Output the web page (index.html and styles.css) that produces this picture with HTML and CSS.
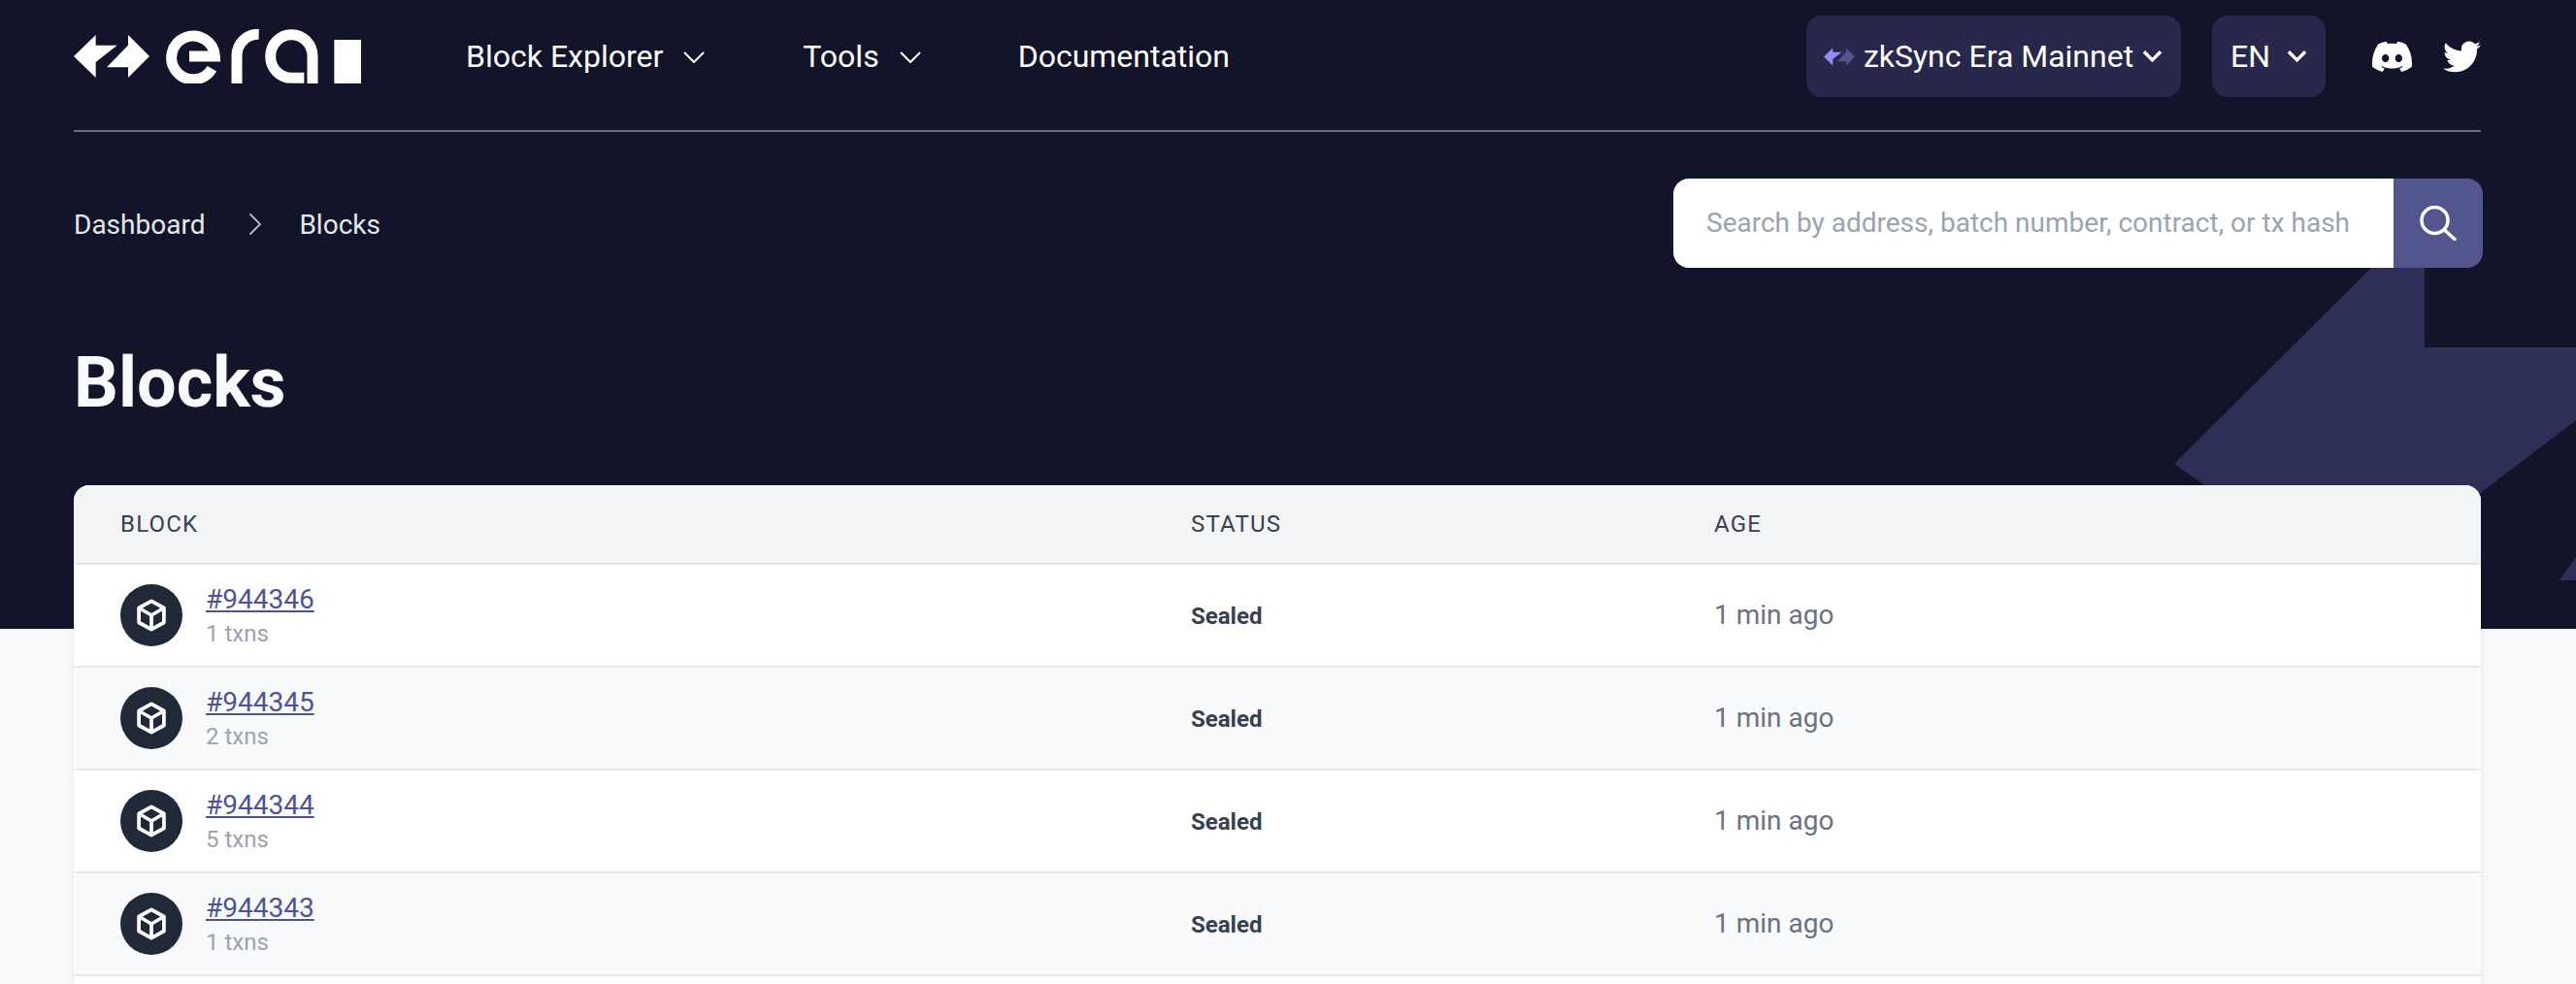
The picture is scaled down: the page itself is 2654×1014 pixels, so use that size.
FILE: index.html
```html
<!DOCTYPE html>
<html lang="en">
<head>
    <meta charset="UTF-8">
    <title>Blocks</title>
    <link rel="stylesheet" href="styles.css">
</head>
<body>

    <svg width="0" height="0" class="defs">
        <symbol id="cube" viewBox="0 0 24 24">
            <path d="M12 2.2 20.6 7v10L12 21.8 3.4 17V7z M3.4 7 12 12l8.600-5 M12 12v9.800" fill="none" stroke="#fff" stroke-width="2.500" stroke-linejoin="round"/>
        </symbol>
    </svg>

    <section class="hero">
        <svg class="hero-shape" viewBox="2200 260 454 388" width="454" height="388">
            <path d="M2443 276 2459 260H2498V358H2654V433L2540 520H2300L2240 478z" fill="#2e2f57"/>
            <path d="M2637 598 2654 574V598z" fill="#2e2f57"/>
        </svg>

        <header class="topbar">
            <a class="logo" href="#">
                <svg viewBox="78 90 888 168" width="296" height="56">
                    <path d="M78 174 146 108V140H212L146 192V240z" fill="#fff"/>
                    <path d="M312 174 246 108V140L180 208H246V240z" fill="#fff"/>
                    <g fill="none" stroke="#fff" stroke-width="33">
                        <path d="M435 174H514A67 67 0 1 0 505 212"/>
                        <path d="M582 258V172A66 66 0 0 1 650 106"/>
                        <path d="M816 258V174A65 67 0 1 0 752 241H790"/>
                    </g>
                    <rect x="883" y="123" width="83" height="135" fill="#fff"/>
                </svg>
            </a>
            <nav class="menu">
                <a href="#">Block Explorer
                    <svg class="chevron" viewBox="0 0 22 12" width="22" height="12"><path d="M1 1l10 10L21 1" fill="none" stroke="#fff" stroke-width="2"/></svg>
                </a>
                <a href="#">Tools
                    <svg class="chevron" viewBox="0 0 22 12" width="22" height="12"><path d="M1 1l10 10L21 1" fill="none" stroke="#fff" stroke-width="2"/></svg>
                </a>
                <a href="#">Documentation</a>
            </nav>
            <div class="topbar-right">
                <button class="pill pill-network">
                    <svg viewBox="78 108 234 132" width="32" height="19">
                        <path d="M78 174 146 108V140H212L146 192V240z" fill="#8e8ffb"/>
                        <path d="M312 174 246 108V140L180 208H246V240z" fill="#53558f"/>
                    </svg>
                    zkSync Era Mainnet
                    <svg viewBox="0 0 22 14" width="21" height="14"><path d="M2 2l9 9 9-9" fill="none" stroke="#fff" stroke-width="3.500"/></svg>
                </button>
                <button class="pill pill-lang">
                    EN
                    <svg viewBox="0 0 22 14" width="21" height="14"><path d="M2 2l9 9 9-9" fill="none" stroke="#fff" stroke-width="3.500"/></svg>
                </button>
                <a class="social" href="#">
                    <svg viewBox="0 0 16 16" width="41" height="41"><path fill="#fff" d="M13.545 2.907a13.227 13.227 0 0 0-3.257-1.011.05.05 0 0 0-.052.025c-.141.25-.297.577-.406.833a12.19 12.19 0 0 0-3.658 0 8.258 8.258 0 0 0-.412-.833.051.051 0 0 0-.052-.025c-1.125.194-2.22.534-3.257 1.011a.041.041 0 0 0-.021.018C.356 6.024-.213 9.047.066 12.032c.001.014.01.028.021.037a13.276 13.276 0 0 0 3.995 2.02.05.05 0 0 0 .056-.019c.308-.42.582-.863.818-1.329a.05.05 0 0 0-.01-.059.051.051 0 0 0-.018-.011 8.875 8.875 0 0 1-1.248-.595.05.05 0 0 1-.02-.066.051.051 0 0 1 .015-.019c.084-.063.168-.129.248-.195a.05.05 0 0 1 .051-.007c2.619 1.196 5.454 1.196 8.041 0a.052.052 0 0 1 .053.007c.08.066.164.132.248.195a.051.051 0 0 1-.004.085 8.254 8.254 0 0 1-1.249.594.05.05 0 0 0-.03.03.052.052 0 0 0 .003.041c.24.465.515.909.817 1.329a.05.05 0 0 0 .056.019 13.235 13.235 0 0 0 4.001-2.02.049.049 0 0 0 .021-.037c.334-3.451-.559-6.449-2.366-9.106a.034.034 0 0 0-.02-.019Zm-8.198 7.307c-.789 0-1.438-.724-1.438-1.612 0-.889.637-1.613 1.438-1.613.807 0 1.45.73 1.438 1.613 0 .888-.637 1.612-1.438 1.612Zm5.316 0c-.788 0-1.438-.724-1.438-1.612 0-.889.637-1.613 1.438-1.613.807 0 1.451.73 1.438 1.613 0 .888-.631 1.612-1.438 1.612Z"/></svg>
                </a>
                <a class="social" href="#">
                    <svg viewBox="0 0 24 24" width="39" height="39"><path fill="#fff" d="M23.953 4.57a10 10 0 01-2.825.775 4.958 4.958 0 002.163-2.723c-.951.555-2.005.959-3.127 1.184a4.92 4.92 0 00-8.384 4.482C7.69 8.095 4.067 6.13 1.64 3.162a4.822 4.822 0 00-.666 2.475c0 1.71.87 3.213 2.188 4.096a4.904 4.904 0 01-2.228-.616v.06a4.923 4.923 0 003.946 4.827 4.996 4.996 0 01-2.212.085 4.936 4.936 0 004.604 3.417 9.867 9.867 0 01-6.102 2.105c-.39 0-.779-.023-1.17-.067a13.995 13.995 0 007.557 2.209c9.053 0 13.998-7.496 13.998-13.985 0-.21 0-.42-.015-.63A9.935 9.935 0 0024 4.59z"/></svg>
                </a>
            </div>
        </header>

        <div class="toolbar">
            <div class="breadcrumb">
                <a href="#">Dashboard</a>
                <svg viewBox="0 0 14 24" width="14" height="24"><path d="M1.500 1.500 12 12 1.500 22.500" fill="none" stroke="#b9bbc6" stroke-width="1.800"/></svg>
                <span>Blocks</span>
            </div>
            <form class="search">
                <input type="text" placeholder="Search by address, batch number, contract, or tx hash">
                <button type="button">
                    <svg viewBox="0 0 38 36" width="38" height="36"><circle cx="15.500" cy="15" r="13.500" fill="none" stroke="#fff" stroke-width="3.500"/><path d="M25.500 25 36 34.500" stroke="#fff" stroke-width="3.500" stroke-linecap="round"/></svg>
                </button>
            </form>
        </div>

        <h1 class="title">Blocks</h1>
    </section>

    <main class="table-wrap">
        <table class="blocks">
            <thead>
                <tr>
                    <th class="col-block">Block</th>
                    <th class="col-status">Status</th>
                    <th>Age</th>
                </tr>
            </thead>
            <tbody>
                <tr>
                    <td>
                        <div class="block-cell">
                            <span class="block-icon"><svg width="36" height="36"><use href="#cube"/></svg></span>
                            <div><a href="#">#944346</a><small>1 txns</small></div>
                        </div>
                    </td>
                    <td class="status">Sealed</td>
                    <td class="age">1 min ago</td>
                </tr>
                <tr>
                    <td>
                        <div class="block-cell">
                            <span class="block-icon"><svg width="36" height="36"><use href="#cube"/></svg></span>
                            <div><a href="#">#944345</a><small>2 txns</small></div>
                        </div>
                    </td>
                    <td class="status">Sealed</td>
                    <td class="age">1 min ago</td>
                </tr>
                <tr>
                    <td>
                        <div class="block-cell">
                            <span class="block-icon"><svg width="36" height="36"><use href="#cube"/></svg></span>
                            <div><a href="#">#944344</a><small>5 txns</small></div>
                        </div>
                    </td>
                    <td class="status">Sealed</td>
                    <td class="age">1 min ago</td>
                </tr>
                <tr>
                    <td>
                        <div class="block-cell">
                            <span class="block-icon"><svg width="36" height="36"><use href="#cube"/></svg></span>
                            <div><a href="#">#944343</a><small>1 txns</small></div>
                        </div>
                    </td>
                    <td class="status">Sealed</td>
                    <td class="age">1 min ago</td>
                </tr>
                <tr class="row-tail">
                    <td colspan="3"></td>
                </tr>
            </tbody>
        </table>
    </main>

</body>
</html>
```

FILE: styles.css
```css
html, body {
    height: 100%;
    overflow: hidden;
}

body {
    margin: 0;
    background-color: #f9fafb;
    font-family: Roboto, "Liberation Sans", sans-serif;
    color: #fff;
}

a {
    color: inherit;
    text-decoration: none;
}

.defs {
    display: block;
    height: 0;
}

/* Dark top area */
.hero {
    position: relative;
    height: 648px;
    padding: 0 98px 0 76px;
    box-sizing: border-box;
    background-color: #121529;
    overflow: hidden;
}

.hero-shape {
    position: absolute;
    right: 0;
    bottom: 0;
}

.topbar {
    position: relative;
    display: flex;
    align-items: center;
    height: 116px;
    padding-bottom: 18px;
    border-bottom: 2px solid #6b6e7f;
}

.logo {
    display: flex;
    margin-right: 108px;
}

.menu {
    display: flex;
    gap: 100px;
    font-size: 32px;
}

.menu a {
    display: flex;
    align-items: center;
    gap: 21px;
}

.menu a:nth-child(2) {
    margin-left: 1px;
}

.chevron {
    margin-top: 2px;
}

.topbar-right {
    display: flex;
    align-items: center;
    margin-left: auto;
}

.pill {
    display: flex;
    align-items: center;
    height: 84px;
    border: none;
    border-radius: 16px;
    background-color: #28284c;
    color: #fff;
    font-family: inherit;
    font-size: 32px;
}

.pill-network {
    width: 386px;
    padding: 0 19px 0 18px;
    gap: 8px;
    justify-content: space-between;
}

.pill-lang {
    width: 117px;
    margin-left: 32px;
    padding: 0 19px;
    justify-content: space-between;
}

.social {
    display: flex;
}

.pill-lang + .social {
    margin-left: 48px;
}

.social + .social {
    margin-left: 32px;
}

.toolbar {
    position: relative;
    display: flex;
    align-items: center;
    justify-content: space-between;
    margin-top: 48px;
}

.breadcrumb {
    display: flex;
    align-items: center;
    gap: 46px;
    padding-top: 2px;
    font-size: 28px;
    color: #e5e7eb;
}

.breadcrumb svg {
    margin-left: -1px;
    margin-right: -8px;
}

.search {
    display: flex;
    height: 92px;
    margin-right: -2px;
}

.search input {
    width: 742px;
    box-sizing: border-box;
    padding: 0 34px 2px;
    border: none;
    border-radius: 16px 0 0 16px;
    background-color: #fff;
    font-family: inherit;
    font-size: 28px;
    outline: none;
}

.search input::placeholder {
    color: #9ca3af;
    opacity: 1;
}

.search button {
    display: flex;
    align-items: center;
    justify-content: center;
    width: 92px;
    border: none;
    border-radius: 0 16px 16px 0;
    background-color: #53558f;
}

.title {
    position: relative;
    margin: 74px 0 0;
    font-size: 72px;
    line-height: 90px;
    font-weight: 700;
    color: #f9fafb;
}

/* Table that overlaps the hero */
.table-wrap {
    position: relative;
    margin: -148px 98px 0 76px;
}

.blocks {
    width: 100%;
    border-collapse: separate;
    border-spacing: 0;
    border-radius: 16px;
    background-color: #fff;
    box-shadow: 0 2px 12px rgba(0, 0, 0, 0.08);
}

.blocks th {
    height: 80px;
    padding: 0 48px;
    background-color: #f3f4f6;
    border-bottom: 2px solid #e5e7eb;
    color: #374151;
    font-size: 24px;
    font-weight: 400;
    letter-spacing: 0.05em;
    text-align: left;
    text-transform: uppercase;
}

.blocks th:first-child {
    border-top-left-radius: 16px;
}

.blocks th:last-child {
    border-top-right-radius: 16px;
}

.col-block {
    width: 1007px;
}

.col-status {
    width: 443px;
}

.blocks td {
    box-sizing: border-box;
    height: 106px;
    padding: 0 48px;
    border-bottom: 2px solid #e5e7eb;
}

.blocks tbody tr:nth-child(even) td {
    background-color: #f9fafb;
}

.blocks .row-tail td {
    height: 20px;
    padding: 0;
    border-bottom: none;
}

.block-cell {
    display: flex;
    align-items: center;
    gap: 24px;
}

.block-icon {
    display: flex;
    align-items: center;
    justify-content: center;
    width: 64px;
    height: 64px;
    border-radius: 50%;
    background-color: #1f2937;
}

.block-cell a {
    display: block;
    color: #4e529a;
    font-size: 28px;
    line-height: 36px;
    text-decoration: underline;
}

.block-cell small {
    display: block;
    margin: 1px 0 -1px;
    color: #9ca3af;
    font-size: 24px;
    line-height: 32px;
}

.blocks .status {
    padding-top: 2px;
    color: #374151;
    font-size: 24px;
    font-weight: 700;
}

.blocks .age {
    padding-bottom: 2px;
    color: #6b7280;
    font-size: 28px;
}
```
